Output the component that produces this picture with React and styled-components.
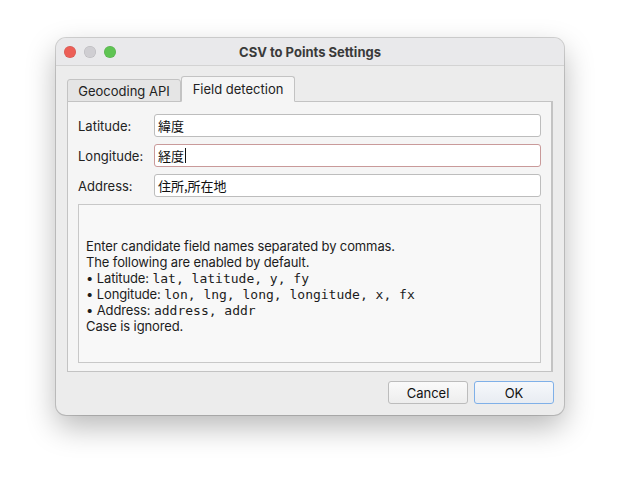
import styled, { createGlobalStyle } from 'styled-components';

const GlobalStyle = createGlobalStyle`
  html, body {
    margin: 0;
    padding: 0;
    background: #ffffff;
  }
  body {
    font-family: Inter, 'Noto Sans CJK JP', sans-serif;
    font-size: 13px;
    color: #1f1f1f;
  }
`;

const Page = styled.div`
  width: 620px;
  height: 490px;
  padding: 38px 0 0 56px;
  box-sizing: border-box;
`;

const Window = styled.div`
  width: 508px;
  height: 377px;
  border-radius: 10px;
  background: #ececec;
  box-shadow: 0 0 0 1px rgba(0, 0, 0, 0.16), 0 12px 30px rgba(0, 0, 0, 0.28);
  overflow: hidden;
  display: flex;
  flex-direction: column;
`;

const TitleBar = styled.div`
  position: relative;
  height: 28px;
  flex: none;
  display: flex;
  align-items: center;
  justify-content: center;
  background: #e9e9eb;
  border-bottom: 1px solid #d3d3d3;
  box-sizing: border-box;
`;

const Lights = styled.div`
  position: absolute;
  left: 8px;
  top: 8px;
  display: flex;
  gap: 8px;
`;

const Light = styled.span`
  width: 12px;
  height: 12px;
  border-radius: 50%;
  background: ${({ $color }) => $color};
  box-shadow: inset 0 0 0 0.5px rgba(0, 0, 0, 0.12);
`;

const Title = styled.div`
  font-weight: 700;
  font-size: 13px;
  color: #3a3a3a;
`;

const Body = styled.div`
  flex: 1;
  display: flex;
  flex-direction: column;
  padding: 11px;
`;

const TabRow = styled.div`
  display: flex;
  align-items: flex-end;
  height: 25px;
  margin-bottom: -1px;
  position: relative;
  z-index: 1;
`;

const Tab = styled.div`
  box-sizing: border-box;
  width: 114px;
  height: ${({ $active }) => ($active ? '26px' : '23px')};
  display: flex;
  align-items: center;
  justify-content: center;
  font-size: 13px;
  color: #222;
  background: ${({ $active }) => ($active ? '#f5f5f5' : '#e5e5e5')};
  border: 1px solid #c3c3c3;
  border-bottom-color: ${({ $active }) => ($active ? '#f5f5f5' : '#c3c3c3')};
  border-radius: 3px 3px 0 0;
`;

const Panel = styled.div`
  width: 486px;
  height: 271px;
  box-sizing: border-box;
  background: #f5f5f5;
  border: 1px solid #c3c3c3;
  border-right-width: 2px;
  padding: 12px 10px 8px 10px;
  display: flex;
  flex-direction: column;
  gap: 7px;
`;

const Row = styled.div`
  display: grid;
  grid-template-columns: 76px 1fr;
  align-items: center;
`;

const Label = styled.div`
  font-size: 13px;
  color: #222;
`;

const Input = styled.div`
  height: 23px;
  box-sizing: border-box;
  background: #ffffff;
  border: 1px solid ${({ $error }) => ($error ? '#c99a9a' : '#bdbdbd')};
  border-radius: 3px;
  padding: 0 3px;
  display: flex;
  align-items: center;
  font-family: 'Noto Sans CJK JP', Inter, sans-serif;
  font-size: 13px;
  color: #111;
`;

const Caret = styled.span`
  display: inline-block;
  width: 1px;
  height: 15px;
  background: #111;
  margin-left: 1px;
`;

const Help = styled.div`
  flex: 1;
  box-sizing: border-box;
  background: #f8f8f8;
  border: 1px solid #c8c8c8;
  padding: 4px 7px 0;
  display: flex;
  flex-direction: column;
  justify-content: center;
  font-size: 13px;
  letter-spacing: -0.12px;
  color: #1c1c1c;
`;

const Line = styled.div`
  height: 16px;
  line-height: 16px;
  white-space: nowrap;
`;

const Code = styled.span`
  font-family: 'DejaVu Sans Mono', 'Liberation Mono', monospace;
  font-size: 13px;
  letter-spacing: 0;
  line-height: 16px;
`;

const Footer = styled.div`
  display: flex;
  justify-content: flex-end;
  gap: 6px;
  margin-top: 9px;
  margin-right: -1px;
`;

const Button = styled.button`
  width: 80px;
  height: 23px;
  box-sizing: border-box;
  font-family: Inter, sans-serif;
  font-size: 13px;
  color: #111;
  border-radius: 3px;
  border: 1px solid ${({ $primary }) => ($primary ? '#7fb0e8' : '#bcbcbc')};
  background: ${({ $primary }) =>
    $primary ? 'linear-gradient(#f6f8fb, #e8ecf2)' : 'linear-gradient(#fafafa, #ededed)'};
  padding: 0;
`;

export default function App() {
  return (
    <>
      <GlobalStyle />
      <Page>
        <Window>
          <TitleBar>
            <Lights>
              <Light $color="#ec5f57" />
              <Light $color="#cfced2" />
              <Light $color="#5fc453" />
            </Lights>
            <Title>CSV to Points Settings</Title>
          </TitleBar>
          <Body>
            <TabRow>
              <Tab>Geocoding API</Tab>
              <Tab $active>Field detection</Tab>
            </TabRow>
            <Panel>
              <Row>
                <Label>Latitude:</Label>
                <Input>緯度</Input>
              </Row>
              <Row>
                <Label>Longitude:</Label>
                <Input $error>
                  経度
                  <Caret />
                </Input>
              </Row>
              <Row>
                <Label>Address:</Label>
                <Input>住所,所在地</Input>
              </Row>
              <Help>
                <Line>Enter candidate field names separated by commas.</Line>
                <Line>The following are enabled by default.</Line>
                <Line>
                  • Latitude: <Code>lat, latitude, y, fy</Code>
                </Line>
                <Line>
                  • Longitude: <Code>lon, lng, long, longitude, x, fx</Code>
                </Line>
                <Line>
                  • Address: <Code>address, addr</Code>
                </Line>
                <Line>Case is ignored.</Line>
              </Help>
            </Panel>
            <Footer>
              <Button>Cancel</Button>
              <Button $primary>OK</Button>
            </Footer>
          </Body>
        </Window>
      </Page>
    </>
  );
}
